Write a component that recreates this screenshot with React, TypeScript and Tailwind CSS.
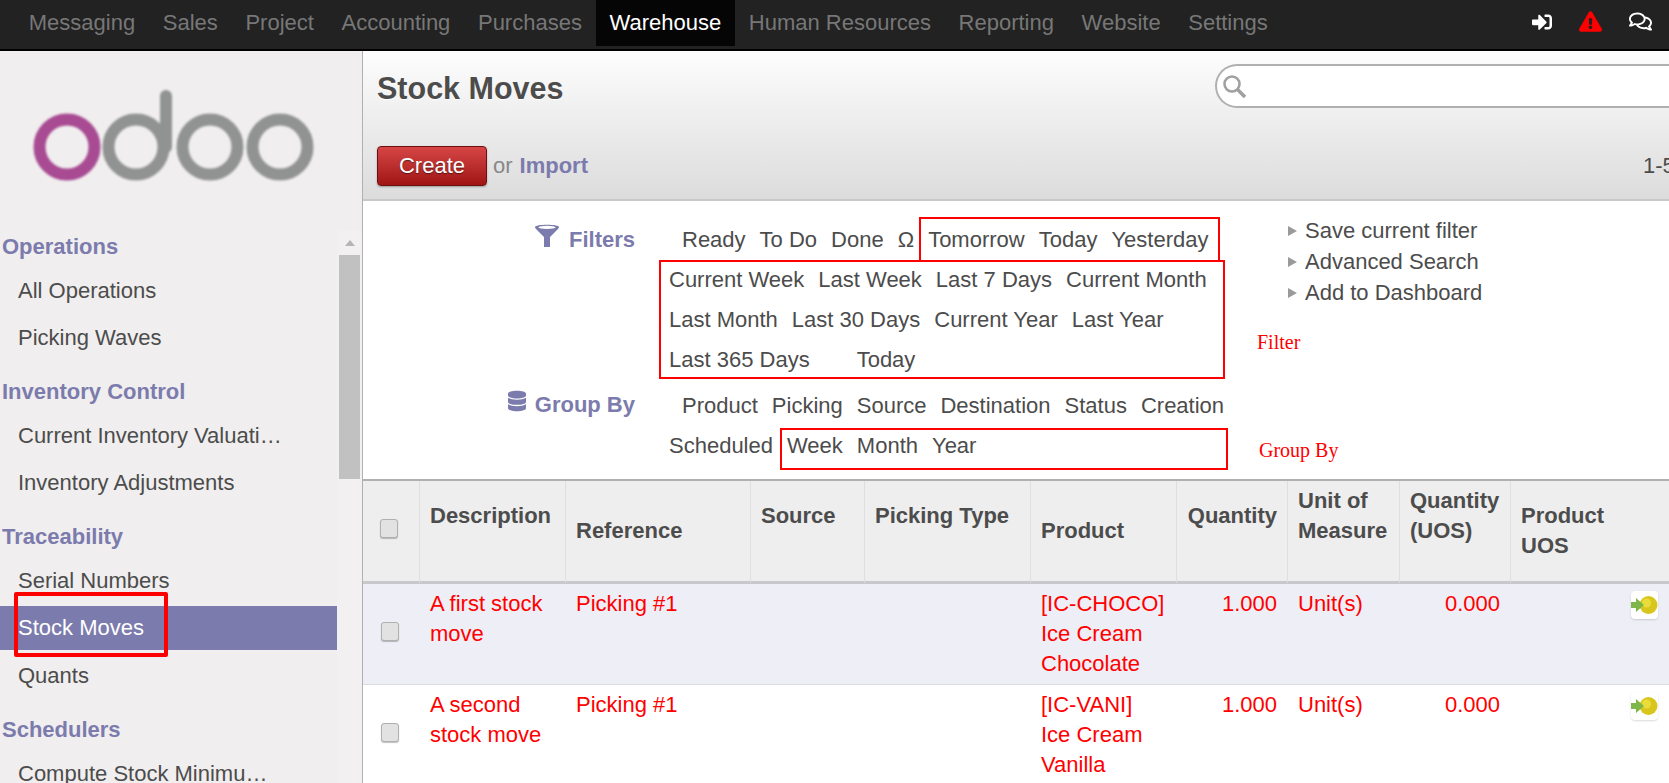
import { FaDatabase, FaExclamationTriangle, FaRegComments, FaSignInAlt } from 'react-icons/fa';

const menuItems = ['Messaging', 'Sales', 'Project', 'Accounting', 'Purchases', 'Warehouse', 'Human Resources', 'Reporting', 'Website', 'Settings'];

const sections = [
  { title: 'Operations', items: ['All Operations', 'Picking Waves'] },
  { title: 'Inventory Control', items: ['Current Inventory Valuati…', 'Inventory Adjustments'] },
  { title: 'Traceability', items: ['Serial Numbers', 'Stock Moves', 'Quants'] },
  { title: 'Schedulers', items: ['Compute Stock Minimu…'] },
];

const filterRows = [
  ['Current Week', 'Last Week', 'Last 7 Days', 'Current Month'],
  ['Last Month', 'Last 30 Days', 'Current Year', 'Last Year'],
];

const moves = [
  { name: ['A first stock', 'move'], product: ['[IC-CHOCO]', 'Ice Cream', 'Chocolate'], bg: 'bg-[#eeeef6]' },
  { name: ['A second', 'stock move'], product: ['[IC-VANI]', 'Ice Cream', 'Vanilla'], bg: 'bg-white' },
];

const Logo = () => (
  <svg width="300" height="100" viewBox="0 0 300 100" className="mt-[35px] ml-[25px] blur-[0.8px]">
    <circle cx="42" cy="61" r="27.5" fill="none" stroke="#a84b93" strokeWidth="12" />
    <circle cx="111" cy="61" r="27.5" fill="none" stroke="#919392" strokeWidth="12" />
    <line x1="141" y1="10" x2="141" y2="61" stroke="#919392" strokeWidth="12" strokeLinecap="round" />
    <circle cx="185" cy="61" r="27.5" fill="none" stroke="#919392" strokeWidth="12" />
    <circle cx="255" cy="61" r="27.5" fill="none" stroke="#919392" strokeWidth="12" />
  </svg>
);

const Sidebar = () => (
  <aside className="flex w-[363px] shrink-0 flex-col overflow-hidden border-r border-[#b0b0b0] bg-[#f0eeee]">
    <div className="h-[180px] shrink-0">
      <Logo />
    </div>
    <div className="flex min-h-0 flex-1">
      <nav className="w-[337px] shrink-0">
        {sections.map((section) => (
          <div key={section.title} className="mb-[16px]">
            <h4 className="mb-[6px] h-[32px] pl-[2px] leading-[32px] font-bold text-[#7c7bad]">{section.title}</h4>
            {section.items.map((item) => (
              <div
                key={item}
                className={`h-[44px] pl-[18px] leading-[44px] whitespace-nowrap ${item === 'Stock Moves' ? 'mb-[4px] bg-[#7c7bad] text-white' : 'mb-[3px] text-[#4c4c4c]'}`}
              >
                {item}
              </div>
            ))}
          </div>
        ))}
      </nav>
      <div className="flex w-[25px] flex-col items-center bg-[#f2f0f0] pt-[9px]">
        <div className="h-0 w-0 border-x-[5px] border-b-[6px] border-x-transparent border-b-[#b5b5b5]" />
        <div className="mt-[9px] h-[224px] w-[21px] bg-[#c1c1c1]" />
      </div>
    </div>
  </aside>
);

const FunnelIcon = () => (
  <svg width="26" height="24" viewBox="0 0 26 24" fill="#7c7bad">
    <path d="M1 3 C1 0 25 0 25 3 C25 4 24 5 23 6 L16 13 V23 L10 23 V13 L3 6 C2 5 1 4 1 3 Z" />
    <ellipse cx="13" cy="3.4" rx="8.5" ry="1.6" fill="#fff" />
  </svg>
);

const ButtonIcon = () => (
  <span className="flex h-[28px] w-[27px] items-center justify-center rounded-[4px] bg-white shadow-[0_1px_2px_rgba(0,0,0,0.15)]">
    <svg width="27" height="24" viewBox="0 0 27 24" className="blur-[0.4px]">
      <circle cx="17.5" cy="12" r="9" fill="#d9c61c" />
      <circle cx="15.5" cy="10" r="4.5" fill="#eadc3a" />
      <path d="M0 9 H5 V5 L13 12 L5 19 V15 H0 Z" fill="#7fb64a" />
    </svg>
  </span>
);

const Checkbox = () => (
  <span className="mx-auto block h-[19px] w-[18px] rounded-[3px] border-[1.5px] border-[#b0b0b0] bg-[#e2e2e2] shadow-[0_1px_1px_rgba(0,0,0,0.25)]" />
);

const FilterItem = ({ children }: { children: string }) => <span className="mr-[14px] whitespace-nowrap">{children}</span>;

const FiltersPanel = () => (
  <div className="flex h-[278px] shrink-0 pt-[19px] text-[#4c4c4c]">
    <div className="-mt-[1px] w-[272px] shrink-0 font-bold text-[#7c7bad]">
      <div className="flex h-[40px] items-center justify-end gap-[9px]">
        <span className="-mt-[6px]"><FunnelIcon /></span>
        Filters
      </div>
      <div className="mt-[125px] flex h-[40px] items-center justify-end gap-[9px]">
        <FaDatabase className="-mt-[6px] h-[24px] w-[18px]" />
        Group By
      </div>
    </div>
    <div className="ml-[34px] w-[566px] shrink-0 leading-[40px]">
      <div className="flex pl-[13px]">
        <FilterItem>Ready</FilterItem>
        <FilterItem>To Do</FilterItem>
        <FilterItem>Done</FilterItem>
        <FilterItem>Ω</FilterItem>
        <FilterItem>Tomorrow</FilterItem>
        <FilterItem>Today</FilterItem>
        <FilterItem>Yesterday</FilterItem>
      </div>
      {filterRows.map((row) => (
        <div key={row[0]} className="flex">
          {row.map((item) => (
            <FilterItem key={item}>{item}</FilterItem>
          ))}
        </div>
      ))}
      <div className="flex">
        <FilterItem>Last 365 Days</FilterItem>
        <span className="ml-[33px]"><FilterItem>Today</FilterItem></span>
      </div>
      <div className="mt-[6px] flex pl-[13px]">
        <FilterItem>Product</FilterItem>
        <FilterItem>Picking</FilterItem>
        <FilterItem>Source</FilterItem>
        <FilterItem>Destination</FilterItem>
        <FilterItem>Status</FilterItem>
        <FilterItem>Creation</FilterItem>
      </div>
      <div className="flex">
        <span className="mr-[14px]">Scheduled</span>
        <FilterItem>Week</FilterItem>
        <FilterItem>Month</FilterItem>
        <FilterItem>Year</FilterItem>
      </div>
    </div>
    <div className="-mt-[5px] ml-[53px] shrink-0 leading-[31px]">
      {['Save current filter', 'Advanced Search', 'Add to Dashboard'].map((item) => (
        <div key={item} className="flex items-center whitespace-nowrap">
          <span className="mr-[8px] h-0 w-0 border-y-[5px] border-l-[9px] border-y-transparent border-l-[#9a9a9a]" />
          {item}
        </div>
      ))}
    </div>
  </div>
);

const thClass = 'border-r border-b-[3px] border-[#dfdfdf] border-b-[#c8c8cc] px-[10px] align-middle font-bold text-left';
const tdClass = 'border-b border-[#dcdcdc]';

const MovesTable = () => (
  <table className="w-[1338px] shrink-0 table-fixed border-separate border-spacing-0 border-t-[2px] border-[#b0b0b4] leading-[30px] text-[#4c4c4c]">
    <colgroup>
      <col className="w-[57px]" />
      <col className="w-[146px]" />
      <col className="w-[185px]" />
      <col className="w-[114px]" />
      <col className="w-[166px]" />
      <col className="w-[146px]" />
      <col className="w-[111px]" />
      <col className="w-[112px]" />
      <col className="w-[111px]" />
      <col className="w-[110px]" />
      <col className="w-[80px]" />
    </colgroup>
    <thead>
      <tr className="h-[103px] bg-[#eeeeee]">
        <th className="border-r border-b-[3px] border-[#dfdfdf] border-b-[#c8c8cc] pr-[4px] pb-[6px] align-middle"><Checkbox /></th>
        <th className={thClass}>Description<br /><br /></th>
        <th className={thClass}>Reference</th>
        <th className={thClass}>Source<br /><br /></th>
        <th className={`${thClass} whitespace-nowrap`}>Picking Type<br /><br /></th>
        <th className={thClass}>Product</th>
        <th className={`${thClass} text-right`}>Quantity<br /><br /></th>
        <th className={thClass}>Unit of Measure<br /><br /></th>
        <th className={thClass}>Quantity (UOS)<br /><br /></th>
        <th className="border-b-[3px] border-b-[#c8c8cc] px-[10px] text-left align-middle font-bold">Product UOS</th>
        <th className="border-b-[3px] border-b-[#c8c8cc]" />
      </tr>
    </thead>
    <tbody className="text-[#ff0000]">
      {moves.map((move) => (
        <tr key={move.name[0]} className={`h-[101px] ${move.bg}`}>
          <td className={`${tdClass} pr-[4px] pb-[6px] align-middle`}><Checkbox /></td>
          <td className={`${tdClass} px-[10px] pt-[5px] align-top whitespace-nowrap`}>
            {move.name[0]}<br />{move.name[1]}
          </td>
          <td className={`${tdClass} px-[10px] pt-[5px] align-top`}>Picking #1</td>
          <td className={tdClass} />
          <td className={tdClass} />
          <td className={`${tdClass} px-[10px] pt-[5px] align-top whitespace-nowrap`}>
            {move.product[0]}<br />{move.product[1]}<br />{move.product[2]}
          </td>
          <td className={`${tdClass} pt-[5px] pr-[11px] text-right align-top`}>1.000</td>
          <td className={`${tdClass} px-[10px] pt-[5px] align-top`}>Unit(s)</td>
          <td className={`${tdClass} pt-[5px] pr-[11px] text-right align-top`}>0.000</td>
          <td className={tdClass} />
          <td className={`${tdClass} pt-[7px] pl-[10px] align-top`}><ButtonIcon /></td>
        </tr>
      ))}
    </tbody>
  </table>
);

export default function App() {
  return (
    <div className="relative flex h-[783px] w-[1669px] flex-col overflow-hidden bg-white font-['Liberation_Sans',Arial,sans-serif] text-[22px]">
      <header className="flex h-[51px] shrink-0 border-b-[2px] border-black bg-[#222222] pl-[15px]">
        {menuItems.map((item) => (
          <a
            key={item}
            className={`flex h-[46px] items-center px-[13.8px] pb-[2px] whitespace-nowrap ${item === 'Warehouse' ? 'bg-[#050505] text-white' : 'text-[#777777]'}`}
          >
            {item}
          </a>
        ))}
        <div className="ml-auto flex h-[43px] items-center gap-[27px] pr-[17px] text-white">
          <FaSignInAlt className="h-[20px] w-[20px]" />
          <FaExclamationTriangle className="h-[23px] w-[23px] text-[#ff0000]" />
          <FaRegComments className="h-[23px] w-[23px]" />
        </div>
      </header>

      <div className="flex min-h-0 flex-1">
        <Sidebar />
        <main className="flex min-w-0 flex-1 flex-col overflow-hidden">
          <div className="h-[150px] shrink-0 border-b-[2px] border-[#c8c8c8] bg-gradient-to-b from-[#fdfdfd] to-[#dcdcdc] pl-[14px]">
            <div className="flex h-[95px]">
              <h1 className="mt-[18px] w-[838px] shrink-0 text-[30.5px] leading-[38px] font-bold text-[#4c4c4c] [text-shadow:0_1px_1px_#fff]">Stock Moves</h1>
              <div className="mt-[13px] flex h-[44px] w-[600px] shrink-0 items-center rounded-l-[22px] border-[2px] border-r-0 border-[#b0b0b0] bg-white pl-[5px]">
                <svg width="25" height="25" viewBox="0 0 25 25" fill="none" stroke="#a0a0a0" strokeWidth="2.6">
                  <circle cx="10" cy="10" r="7.5" />
                  <line x1="15.5" y1="15.5" x2="23" y2="23" strokeWidth="3.6" />
                </svg>
              </div>
            </div>
            <div className="flex h-[40px] items-center">
              <div className="flex w-[1266px] shrink-0 items-center leading-[38px]">
                <button className="h-[40px] w-[110px] rounded-[4px] border border-[#6e1010] bg-gradient-to-b from-[#d64545] to-[#a01414] pb-[2px] text-white shadow-[0_1px_2px_rgba(0,0,0,0.3)] [text-shadow:0_1px_1px_rgba(0,0,0,0.5)]">Create</button>
                <span className="ml-[6px] text-[#888888]">or</span>
                <a className="ml-[7px] font-bold text-[#7c7bad]">Import</a>
              </div>
              <span className="shrink-0 whitespace-nowrap leading-[38px] text-[#4c4c4c]">1-5 of 5</span>
            </div>
          </div>
          <FiltersPanel />
          <MovesTable />
        </main>
      </div>

      {/* red annotations drawn over the screenshot */}
      <div className="absolute top-[592px] left-[14px] h-[65px] w-[154px] rounded-[2px] border-[4px] border-[#ff0000]" />
      <div className="absolute top-[217px] left-[919px] h-[45px] w-[301px] border-[2px] border-[#ff0000]" />
      <div className="absolute top-[260px] left-[659px] h-[119px] w-[566px] border-[2px] border-[#ff0000]" />
      <div className="absolute top-[428px] left-[780px] h-[42px] w-[448px] border-[2px] border-[#ff0000]" />
      <span className="absolute top-[327px] left-[1257px] font-['Liberation_Serif',serif] text-[20px] text-[#ff0000]">Filter</span>
      <span className="absolute top-[435px] left-[1259px] font-['Liberation_Serif',serif] text-[20px] text-[#ff0000]">Group By</span>
    </div>
  );
}
